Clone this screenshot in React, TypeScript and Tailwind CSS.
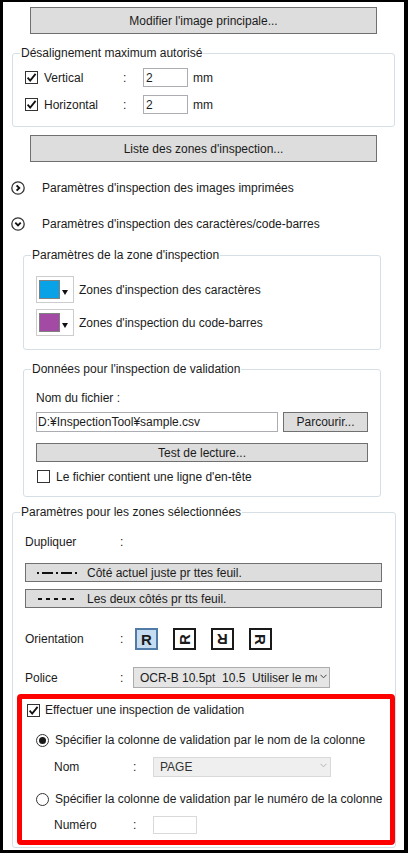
import React from "react"

function Check({ checked }: { checked?: boolean }) {
  return (
    <span className="flex h-[13px] w-[13px] shrink-0 items-center justify-center border border-[#333333] bg-white">
      {checked && (
        <svg width="11" height="11" viewBox="0 0 11 11">
          <path d="M1.6 5.6 L4.2 8.6 L9.6 1.9" fill="none" stroke="#111111" strokeWidth="1.8" />
        </svg>
      )}
    </span>
  )
}

function Radio({ on }: { on?: boolean }) {
  return (
    <span className="flex h-[13px] w-[13px] shrink-0 items-center justify-center rounded-full border border-[#333333] bg-white">
      {on && <span className="h-[7px] w-[7px] rounded-full bg-[#1a1a1a]" />}
    </span>
  )
}

function Expander({ open }: { open?: boolean }) {
  return (
    <svg width="14" height="14" viewBox="0 0 14 14" className="shrink-0">
      <circle cx="7" cy="7" r="6.2" fill="white" stroke="#333333" strokeWidth="1.3" />
      {open ? (
        <path d="M4.3 5.6 L7 8.3 L9.7 5.6" fill="none" stroke="#111111" strokeWidth="1.9" />
      ) : (
        <path d="M5.6 4.3 L8.3 7 L5.6 9.7" fill="none" stroke="#111111" strokeWidth="1.9" />
      )}
    </svg>
  )
}

function Group({ title, className, children }: { title: string; className?: string; children: React.ReactNode }) {
  return (
    <fieldset className={`rounded-[3px] border border-[#d5dfe5] ${className ?? ""}`}>
      <legend className="ml-[7px] px-[1px] leading-[16px]">{title}</legend>
      {children}
    </fieldset>
  )
}

function Swatch({ color }: { color: string }) {
  return (
    <div className="flex h-[27px] w-[38px] shrink-0 items-center border border-[#cccccc] bg-white pl-[2px]">
      <span className={`h-[19px] w-[21px] border border-[#808080] ${color}`} />
      <svg width="6" height="5" viewBox="0 0 6 5" className="ml-[2px] mt-[6px]">
        <path d="M0 0 H6 L3 5 Z" fill="#111111" />
      </svg>
    </div>
  )
}

function Orient({ rot, active }: { rot: string; active?: boolean }) {
  return (
    <div
      className={`flex h-[22px] w-[23px] items-center justify-center border-2 ${
        active ? "border-[#4f7ba6] bg-[#c6dcf1]" : "border-[#1a1a1a] bg-white"
      }`}
    >
      <span className={`inline-block text-[15px] font-bold leading-none ${rot}`}>R</span>
    </div>
  )
}

export default function App() {
  return (
    <div className="h-[856px] w-[409px] bg-white font-['Liberation_Sans',Arial,sans-serif] text-[12px] leading-[16px] text-[#1b1b1b]">
      <div className="flex h-[853px] w-[408px] flex-col border-b-[3px] border-l-[3px] border-r-4 border-t-2 border-black">
        {/* Image principale */}
        <button className="ml-[27px] mt-[5px] h-[27px] w-[347px] shrink-0 border border-[#707070] bg-[#dddddd]">
          Modifier l'image principale...
        </button>

        <Group title="Désalignement maximum autorisé" className="ml-[9px] mt-[11px] w-[383px] shrink-0 pb-[8px]">
          <div className="pl-[12px] pt-[3px]">
            {["Vertical", "Horizontal"].map((l) => (
              <div key={l} className="flex h-[27px] items-center">
                <Check checked />
                <span className="ml-[6px] w-[79px]">{l}</span>
                <span className="w-[20px]">:</span>
                <input
                  readOnly
                  value="2"
                  className="h-[19px] w-[45px] border border-[#abadb3] bg-white pl-[2px] text-[12px] outline-none"
                />
                <span className="ml-[5px]">mm</span>
              </div>
            ))}
          </div>
        </Group>

        <button className="ml-[27px] mt-[8px] h-[27px] w-[347px] shrink-0 border border-[#707070] bg-[#dddddd]">
          Liste des zones d'inspection...
        </button>

        <div className="ml-[8px] mt-[14px] flex h-[24px] shrink-0 items-center">
          <Expander />
          <span className="ml-[17px]">Paramètres d'inspection des images imprimées</span>
        </div>
        <div className="ml-[8px] mt-[12px] flex h-[24px] shrink-0 items-center">
          <Expander open />
          <span className="ml-[17px]">Paramètres d'inspection des caractères/code-barres</span>
        </div>

        <Group title="Paramètres de la zone d'inspection" className="ml-[20px] mt-[11px] w-[358px] shrink-0 pb-[13px]">
          <div className="flex flex-col gap-[6px] pl-[12px] pt-[13px]">
            <div className="flex items-center">
              <Swatch color="bg-[#0aa2e6]" />
              <span className="ml-[5px]">Zones d'inspection des caractères</span>
            </div>
            <div className="flex items-center">
              <Swatch color="bg-[#a34aa5]" />
              <span className="ml-[5px]">Zones d'inspection du code-barres</span>
            </div>
          </div>
        </Group>

        <Group title="Données pour l'inspection de validation" className="ml-[20px] mt-[11px] w-[358px] shrink-0 pb-[11px]">
          <div className="flex flex-col pl-[12px] pt-[13px]">
            <div className="h-[16px]">Nom du fichier :</div>
            <div className="mt-[6px] flex gap-[5px]">
              <input
                readOnly
                value="D:¥InspectionTool¥sample.csv"
                className="h-[20px] w-[242px] border border-[#abadb3] bg-white pl-[1px] text-[12px] outline-none"
              />
              <button className="h-[20px] w-[85px] border border-[#707070] bg-[#dddddd]">Parcourir...</button>
            </div>
            <button className="mt-[11px] h-[19px] w-[332px] border border-[#707070] bg-[#dddddd] leading-[16px]">
              Test de lecture...
            </button>
            <div className="mt-[6px] flex h-[17px] items-center pl-[1px]">
              <Check />
              <span className="ml-[6px]">Le fichier contient une ligne d'en-tête</span>
            </div>
          </div>
        </Group>

        <Group title="Paramètres pour les zones sélectionnées" className="ml-[9px] mt-[7px] w-[383px] shrink-0 pb-[2px]">
          <div className="flex flex-col pl-[12px] pt-[14px]">
            <div className="flex h-[16px] items-center">
              <span className="w-[95px]">Dupliquer</span>
              <span>:</span>
            </div>
            <button className="mt-[13px] flex h-[19px] w-[357px] items-center border border-[#707070] bg-[#dddddd] pl-[11px]">
              <svg width="40" height="4" viewBox="0 0 40 4">
                <g fill="#111111">
                  <rect x="0" y="1" width="2" height="2" />
                  <rect x="5" y="1" width="11" height="2" />
                  <rect x="19" y="1" width="2" height="2" />
                  <rect x="24" y="1" width="11" height="2" />
                  <rect x="38" y="1" width="2" height="2" />
                </g>
              </svg>
              <span className="ml-[10px]">Côté actuel juste pr ttes feuil.</span>
            </button>
            <button className="mt-[7px] flex h-[19px] w-[357px] items-center border border-[#707070] bg-[#dddddd] pl-[11px]">
              <svg width="40" height="4" viewBox="0 0 40 4">
                <g fill="#111111">
                  <rect x="1" y="1" width="4" height="2" />
                  <rect x="9" y="1" width="4" height="2" />
                  <rect x="17" y="1" width="4" height="2" />
                  <rect x="25" y="1" width="4" height="2" />
                  <rect x="33" y="1" width="4" height="2" />
                </g>
              </svg>
              <span className="ml-[10px]">Les deux côtés pr tts feuil.</span>
            </button>

            <div className="mt-[20px] flex h-[22px] items-center">
              <span className="w-[95px]">Orientation</span>
              <span className="w-[15px]">:</span>
              <div className="flex gap-[15px]">
                <Orient rot="" active />
                <Orient rot="-rotate-90" />
                <Orient rot="rotate-180" />
                <Orient rot="rotate-90" />
              </div>
            </div>

            <div className="mt-[17px] flex h-[21px] items-center">
              <span className="w-[95px]">Police</span>
              <span className="w-[13px]">:</span>
              <div className="flex h-[21px] w-[197px] items-center border border-[#acacac] bg-[#e5e5e5] pl-[6px]">
                <span className="w-[177px] overflow-hidden whitespace-pre">OCR-B 10.5pt  10.5  Utiliser le mo</span>
                <svg width="7" height="5" viewBox="0 0 7 5" className="mb-[3px] ml-[3px]">
                  <path d="M0.5 0.8 L3.5 3.8 L6.5 0.8" fill="none" stroke="#444444" strokeWidth="1" />
                </svg>
              </div>
            </div>
          </div>

          {/* validation */}
          <div className="ml-[4px] mt-[6px] flex w-[378px] flex-col rounded-[4px] border-[5px] border-[#ff0000] pb-[6px] pt-[3px]">
            <div className="flex h-[16px] items-center pl-[5px]">
              <Check checked />
              <span className="ml-[5px]">Effectuer une inspection de validation</span>
            </div>
            <div className="mt-[14px] flex h-[16px] items-center pl-[14px]">
              <Radio on />
              <span className="ml-[6px]">Spécifier la colonne de validation par le nom de la colonne</span>
            </div>
            <div className="mt-[9px] flex h-[20px] items-center pl-[32px]">
              <span className="w-[79px]">Nom</span>
              <span className="w-[20px]">:</span>
              <div className="flex h-[20px] w-[178px] items-center border border-[#d9d9d9] bg-[#efefef] pl-[6px]">
                <span className="w-[150px] text-[#333333]">PAGE</span>
                <svg width="7" height="5" viewBox="0 0 7 5" className="mb-[3px] ml-[10px]">
                  <path d="M0.5 0.8 L3.5 3.8 L6.5 0.8" fill="none" stroke="#b5b5b5" strokeWidth="1" />
                </svg>
              </div>
            </div>
            <div className="mt-[14px] flex h-[16px] items-center pl-[14px]">
              <Radio />
              <span className="ml-[6px]">Spécifier la colonne de validation par le numéro de la colonne</span>
            </div>
            <div className="mt-[9px] flex h-[18px] items-center pl-[32px]">
              <span className="w-[79px]">Numéro</span>
              <span className="w-[20px]">:</span>
              <div className="h-[18px] w-[44px] border border-[#d9d9d9] bg-white" />
            </div>
          </div>
        </Group>
      </div>
    </div>
  )
}
